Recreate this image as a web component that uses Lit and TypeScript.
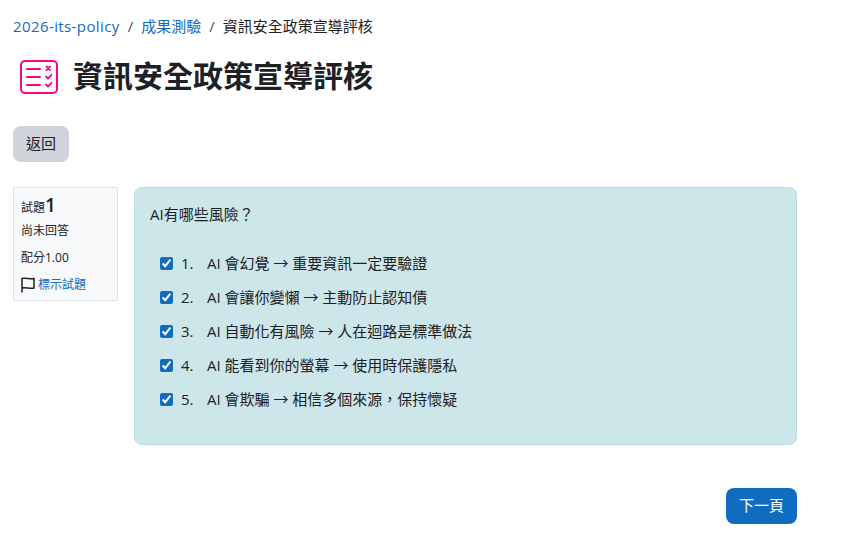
import { LitElement, css, html } from 'lit';
import { customElement } from 'lit/decorators.js';

const ANSWERS = [
  ['1.', 'AI 會幻覺 → 重要資訊一定要驗證'],
  ['2.', 'AI 會讓你變懶 → 主動防止認知債'],
  ['3.', 'AI 自動化有風險 → 人在迴路是標準做法'],
  ['4.', 'AI 能看到你的螢幕 → 使用時保護隱私'],
  ['5.', 'AI 會欺騙 → 相信多個來源，保持懷疑'],
];

@customElement('app-root')
export class AppRoot extends LitElement {
  static override styles = css`
    :host {
      display: block;
      height: 541px;
      overflow: hidden;
      background: #fff;
      color: #1d2125;
      font-family: 'Open Sans', 'Noto Sans CJK TC', sans-serif;
      font-size: 15px;
      line-height: 22px;
    }

    .page {
      display: flex;
      flex-direction: column;
      padding: 15px 46px 0 13px;
    }

    .crumbs {
      display: flex;
      align-items: center;
      gap: 8px;
      height: 22px;
    }

    a {
      color: #0f6cbf;
      text-decoration: none;
    }

    .crumbs .course {
      letter-spacing: 0.4px;
    }

    .crumbs .sep {
      color: #495057;
    }

    .title {
      display: flex;
      align-items: center;
      gap: 14px;
      margin: 20px 0 0 6px;
      height: 40px;
    }

    .title svg {
      flex: none;
      width: 40px;
      height: 40px;
    }

    h1 {
      margin: 0 0 2px;
      font-size: 30px;
      line-height: 38px;
      font-weight: 700;
    }

    .back {
      align-self: flex-start;
      box-sizing: border-box;
      margin-top: 29px;
      width: 56px;
      height: 36px;
      padding-bottom: 2px;
      display: flex;
      align-items: center;
      justify-content: center;
      border-radius: 8px;
      background: #ced4da;
    }

    .question {
      display: flex;
      gap: 16px;
      margin-top: 25px;
    }

    .info {
      flex: none;
      box-sizing: border-box;
      width: 105px;
      height: 114px;
      padding: 5px 7px;
      border: 1px solid #dee2e6;
      border-radius: 2px;
      background: #f8f9fa;
      font-size: 12px;
      line-height: 18px;
    }

    .info .no {
      height: 24px;
      display: flex;
      align-items: flex-end;
      margin-bottom: 5px;
    }

    .info .no b {
      font-size: 19px;
      font-weight: 600;
      line-height: 24px;
    }

    .info .row {
      margin-bottom: 9px;
    }

    .info .flag {
      display: flex;
      align-items: center;
      gap: 3px;
    }

    .content {
      flex: 1;
      box-sizing: border-box;
      height: 258px;
      padding: 15px;
      border: 1px solid #b8dce2;
      border-radius: 8px;
      background: #cce6ea;
    }

    .prompt {
      margin-bottom: 27px;
    }

    .answers {
      display: flex;
      flex-direction: column;
      gap: 12px;
      padding-left: 10px;
    }

    .answer {
      display: flex;
      align-items: center;
      height: 22px;
    }

    .answer input {
      flex: none;
      width: 13px;
      height: 13px;
      margin: 0 8px 0 0;
      accent-color: #0f6cbf;
    }

    .answer .num {
      width: 26px;
    }

    .next {
      align-self: flex-end;
      box-sizing: border-box;
      margin-top: 43px;
      width: 71px;
      height: 36px;
      padding-bottom: 2px;
      display: flex;
      align-items: center;
      justify-content: center;
      border-radius: 8px;
      background: #0f6cbf;
      color: #fff;
    }
  `;

  override render() {
    return html`
      <div class="page">
        <nav class="crumbs">
          <a class="course" href="#">2026-its-policy</a>
          <span class="sep">/</span>
          <a href="#">成果測驗</a>
          <span class="sep">/</span>
          <span>資訊安全政策宣導評核</span>
        </nav>

        <div class="title">
          <svg viewBox="0 0 40 40" fill="none" stroke="#f7058b" stroke-linecap="round" stroke-linejoin="round">
            <rect x="2" y="4" width="36" height="32" rx="4" stroke-width="2" />
            <path d="M8 12h13M8 20h13M8 28h13" stroke-width="2" />
            <path d="M27.500 9.500l3.500 3.500M31 9.500L27.500 13" stroke-width="1.800" />
            <path d="M27 19.500l2 2 3.500-3.500M27 27.500l2 2 3.500-3.500" stroke-width="1.800" />
          </svg>
          <h1>資訊安全政策宣導評核</h1>
        </div>

        <div class="back">返回</div>

        <div class="question">
          <div class="info">
            <div class="no">試題<b>1</b></div>
            <div class="row">尚未回答</div>
            <div class="row">配分1.00</div>
            <div class="flag">
              <svg width="14" height="16" viewBox="0 0 14 16" fill="none" stroke="#1d2125" stroke-width="1.500">
                <path d="M1 15.500V1.500C4.500 0.500 9 2.500 13 1.500V11C9 12 4.500 10 1 11" />
              </svg>
              <a href="#">標示試題</a>
            </div>
          </div>

          <div class="content">
            <div class="prompt">AI有哪些風險？</div>
            <div class="answers">
              ${ANSWERS.map(
                ([num, text]) => html`
                  <label class="answer">
                    <input type="checkbox" checked />
                    <span class="num">${num}</span>
                    <span>${text}</span>
                  </label>
                `,
              )}
            </div>
          </div>
        </div>

        <div class="next">下一頁</div>
      </div>
    `;
  }
}
